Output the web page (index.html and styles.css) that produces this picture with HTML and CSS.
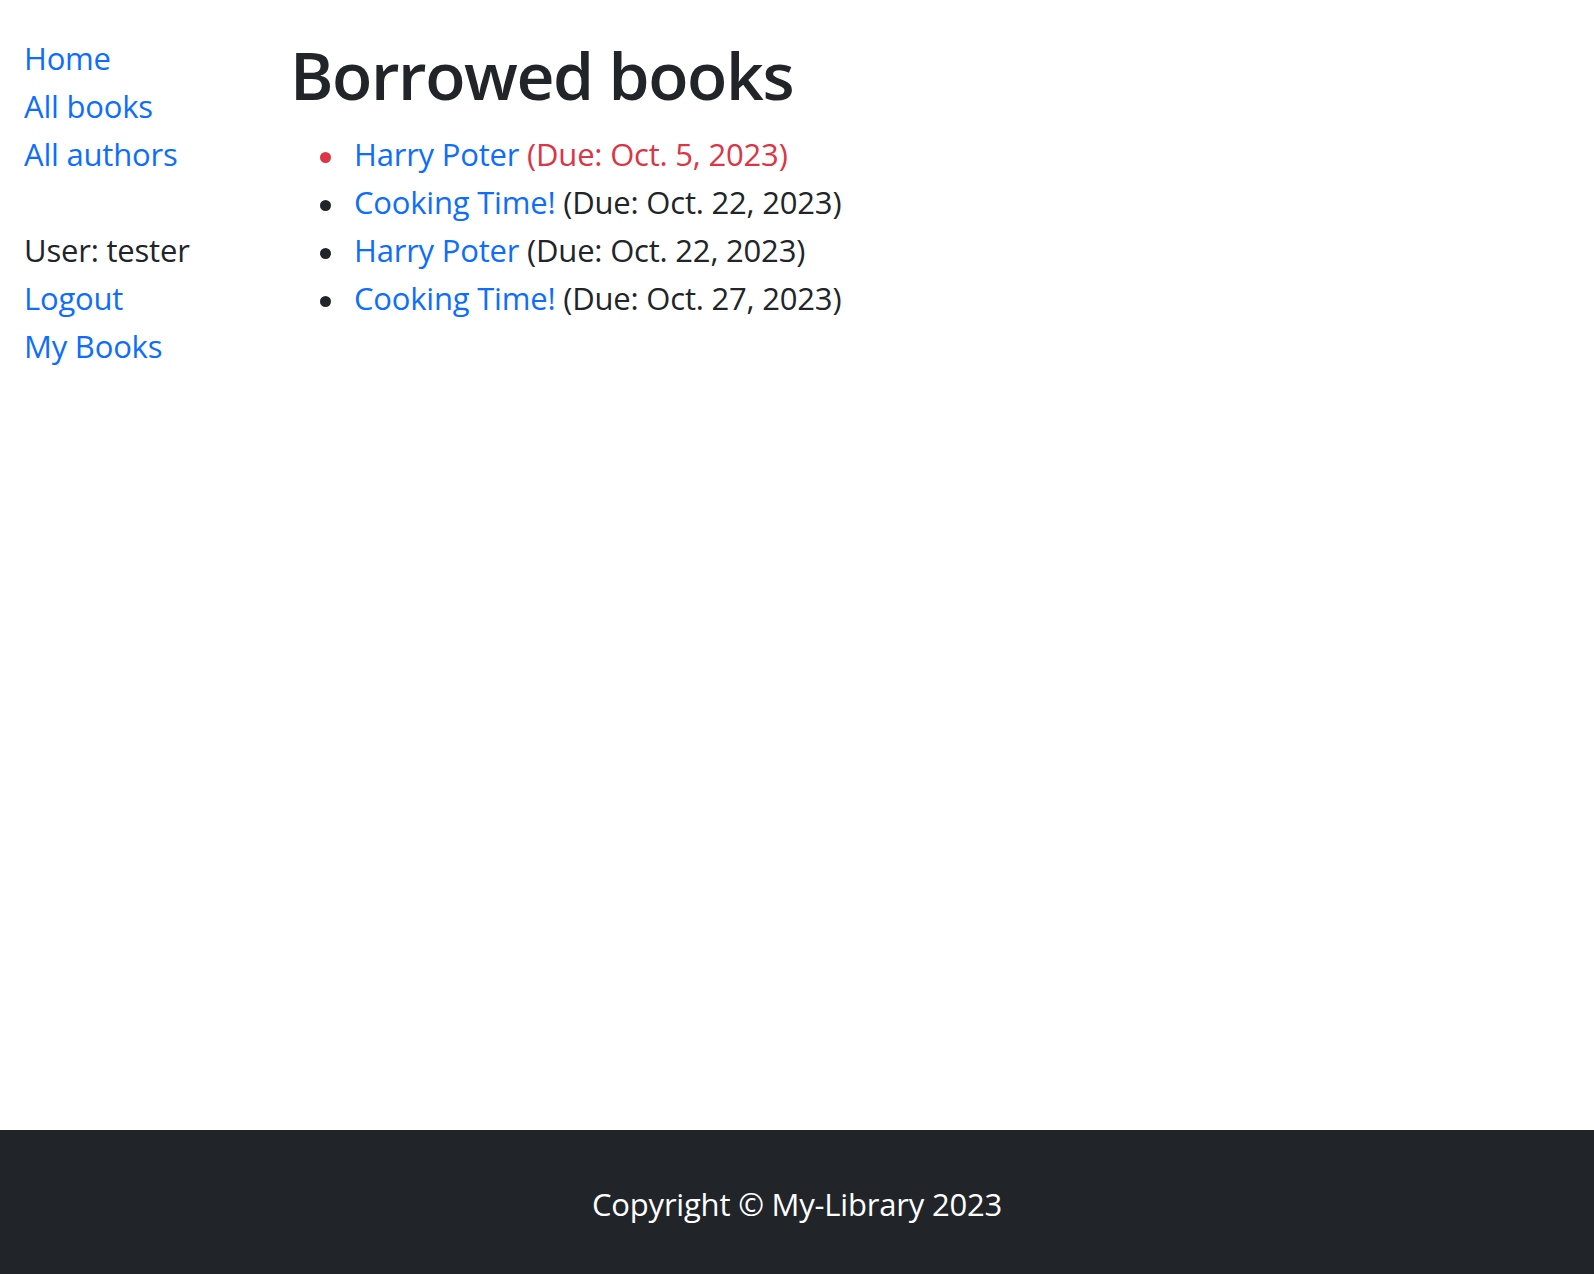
FILE: index.html
```html
<!DOCTYPE html>
<html lang="en">
<head>
<meta charset="utf-8">
<title>Local Library</title>
<link rel="stylesheet" href="styles.css">
</head>
<body>
<div class="page">
  <div class="layout">
    <aside class="sidebar">
      <ul class="nav-list nav-main">
        <li><a href="#">Home</a></li>
        <li><a href="#">All books</a></li>
        <li><a href="#">All authors</a></li>
      </ul>
      <ul class="nav-list">
        <li>User: tester</li>
        <li><a href="#">Logout</a></li>
        <li><a href="#">My Books</a></li>
      </ul>
    </aside>
    <main class="content">
      <h1 class="title">Borrowed books</h1>
      <ul class="books">
        <li class="overdue"><a href="#">Harry Poter</a> (Due: Oct. 5, 2023)</li>
        <li><a href="#">Cooking Time!</a> (Due: Oct. 22, 2023)</li>
        <li><a href="#">Harry Poter</a> (Due: Oct. 22, 2023)</li>
        <li><a href="#">Cooking Time!</a> (Due: Oct. 27, 2023)</li>
      </ul>
    </main>
  </div>
</div>
<footer class="footer">Copyright © My-Library 2023</footer>
</body>
</html>
```
FILE: styles.css
```css
html, body {
  margin: 0;
  padding: 0;
}
body {
  font-family: "Open Sans", "Noto Sans", "Liberation Sans", sans-serif;
  font-size: 31px;
  letter-spacing: -0.2px;
  line-height: 48px;
  color: #212529;
  background: #fff;
  min-height: 100vh;
  display: flex;
  flex-direction: column;
}
a {
  color: #0d6efd;
  text-decoration: none;
}
.page {
  flex: 1;
}
.layout {
  display: grid;
  grid-template-columns: 266px 1fr;
  padding: 34px 24px 0 24px;
}
.nav-list {
  list-style: none;
  margin: 0;
  padding: 0;
}
.nav-main {
  margin-bottom: 48px;
}
.title {
  font-size: 66px;
  font-weight: 600;
  letter-spacing: -1.4px;
  line-height: 80px;
  margin: 0 0 16px 0;
}
.books {
  list-style: none;
  margin: 0;
  padding-left: 64px;
}
.books li::before {
  content: "";
  display: inline-block;
  width: 11px;
  height: 11px;
  border-radius: 50%;
  background: currentColor;
  vertical-align: middle;
  margin-left: -34px;
  margin-right: 23px;
}
.books li.overdue {
  color: #dc3545;
}
.footer {
  background: #212529;
  color: #fff;
  text-align: center;
  padding: 50px 0 46px 0;
  line-height: 48px;
}
```
